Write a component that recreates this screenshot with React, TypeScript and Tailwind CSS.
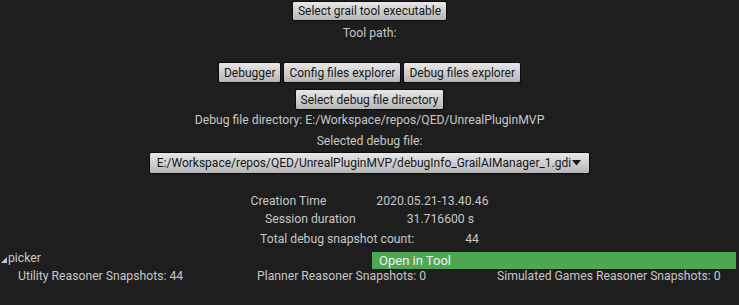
import React from "react";

const btn =
  "h-full px-[5px] flex items-center justify-center rounded-[2px] border border-[#0c0c0c] bg-gradient-to-b from-[#e8e8e8] to-[#b6b6b6] text-[#161616] text-[12px] leading-none whitespace-nowrap";

export default function App() {
  return (
    <div
      className="w-[739px] h-[305px] overflow-hidden bg-[#1e1e1e] text-[#c6c6c6] text-[12.2px] leading-none flex flex-col"
      style={{ fontFamily: "Roboto, 'Liberation Sans', sans-serif" }}
    >
      <div className="h-[1px]" />
      <div className="h-[20px] flex justify-center">
        <div className={btn}>Select grail tool executable</div>
      </div>
      <div className="h-[24px] flex items-center justify-center">Tool path:</div>
      <div className="h-[17px]" />
      <div className="h-[21px] flex justify-center gap-[2px]">
        <div className={btn}>Debugger</div>
        <div className={btn}>Config files explorer</div>
        <div className={btn}>Debug files explorer</div>
      </div>
      <div className="h-[6px]" />
      <div className="h-[21px] flex justify-center">
        <div className={btn}>Select debug file directory</div>
      </div>
      <div className="h-[1px]" />
      <div className="h-[19px] flex items-center justify-center">
        Debug file directory: E:/Workspace/repos/QED/UnrealPluginMVP
      </div>
      <div className="h-[2px]" />
      <div className="h-[19px] flex items-center justify-center">Selected debug file:</div>
      <div className="h-[1px]" />
      <div className="h-[22px] flex justify-center">
        <div className={btn + " w-[441px] justify-between pl-[3px] pr-[4px]"}>
          <span>E:/Workspace/repos/QED/UnrealPluginMVP/debugInfo_GrailAIManager_1.gdi</span>
          <svg width="9" height="6" viewBox="0 0 9 6" className="ml-[1px] shrink-0">
            <path d="M0 0 H9 L4.5 5.5 Z" fill="#161616" />
          </svg>
        </div>
      </div>
      <div className="h-[18px]" />
      <div className="h-[18px] flex items-center justify-center gap-[50px]">
        <span>Creation Time</span>
        <span>2020.05.21-13.40.46</span>
      </div>
      <div className="h-[19px] flex items-center justify-center gap-[51px]">
        <span>Session duration</span>
        <span>31.716600 s</span>
      </div>
      <div className="h-[20px] flex items-center justify-center gap-[51px]">
        <span>Total debug snapshot count:</span>
        <span>44</span>
      </div>
      <div className="h-[3px]" />
      <div className="h-[17px] flex items-center">
        <div className="flex-1 flex items-center self-start h-[13px]">
          <svg width="6" height="6" viewBox="0 0 6 6" className="ml-[1px] mt-[3px]">
            <path d="M6 0 V6 H0 Z" fill="#c6c6c6" />
          </svg>
          <span className="ml-[1px]">picker</span>
        </div>
        <div className="w-[364px] h-full mr-[3px] bg-[#4ea852] text-[#f2f2f2] text-[13px] flex items-center pl-[7px]">
          Open in Tool
        </div>
      </div>
      <div className="h-[15px] flex items-center">
        <div className="w-[239px] pl-[18px]">Utility Reasoner Snapshots: 44</div>
        <div className="w-[240px] pl-[18px]">Planner Reasoner Snapshots: 0</div>
        <div className="flex-1 pl-[18px]">Simulated Games Reasoner Snapshots: 0</div>
      </div>
    </div>
  );
}
